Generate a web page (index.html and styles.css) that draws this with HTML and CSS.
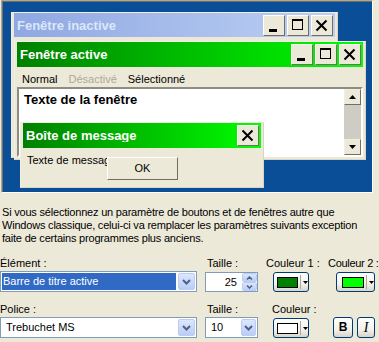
FILE: index.html
```html
<!DOCTYPE html>
<html lang="fr">
<head>
    <meta charset="UTF-8">
    <meta name="viewport" content="width=device-width, initial-scale=1.0">
    <title>Apparence</title>
    <link rel="stylesheet" href="styles.css">
</head>
<body>

    <!-- Apercu -->
    <div class="preview">
        <div class="win win-inactive">
            <div class="title title-inactive">
                <span class="title-text">Fenêtre inactive</span>
                <span class="tbtn"><svg width="20" height="19"><rect x="5" y="13" width="8" height="3"/></svg></span>
                <span class="tbtn"><svg width="20" height="19"><path d="M4 3h11v11H4z M5 5v8h9V5z" fill-rule="evenodd"/></svg></span>
                <span class="tbtn"><svg width="20" height="19"><path d="M4.5 4.5l10 10M14.5 4.5l-10 10" stroke="#000" stroke-width="2"/></svg></span>
            </div>
        </div>

        <div class="win win-active">
            <div class="title title-active">
                <span class="title-text">Fenêtre active</span>
                <span class="tbtn"><svg width="20" height="19"><rect x="5" y="13" width="8" height="3"/></svg></span>
                <span class="tbtn"><svg width="20" height="19"><path d="M4 3h11v11H4z M5 5v8h9V5z" fill-rule="evenodd"/></svg></span>
                <span class="tbtn"><svg width="20" height="19"><path d="M4.5 4.5l10 10M14.5 4.5l-10 10" stroke="#000" stroke-width="2"/></svg></span>
            </div>
            <div class="menu">
                <span>Normal</span>
                <span class="disabled">Désactivé</span>
                <span>Sélectionné</span>
            </div>
            <div class="client">
                <div class="client-text">Texte de la fenêtre</div>
                <div class="scrollbar">
                    <span class="sb-btn"><svg width="7" height="4"><path d="M0 4L3.5 0 7 4z"/></svg></span>
                    <span class="sb-track"></span>
                    <span class="sb-btn"><svg width="7" height="4"><path d="M0 0h7L3.5 4z"/></svg></span>
                </div>
            </div>
        </div>

        <div class="win win-msg">
            <div class="title title-active">
                <span class="title-text">Boîte de message</span>
                <span class="tbtn"><svg width="20" height="19"><path d="M4.5 4.5l10 10M14.5 4.5l-10 10" stroke="#000" stroke-width="2"/></svg></span>
            </div>
            <div class="msg-body">
                Texte de message
                <button class="ok">OK</button>
            </div>
        </div>
    </div>

    <p class="desc">
        Si vous sélectionnez un paramètre de boutons et de fenêtres autre que<br>
        Windows classique, celui-ci va remplacer les paramètres suivants exception<br>
        faite de certains programmes plus anciens.
    </p>

    <!-- Reglages -->
    <div class="settings">
        <span class="lbl">Élément :</span>
        <span class="lbl lbl-size">Taille :</span>
        <span class="lbl">Couleur 1 :</span>
        <span class="lbl lbl-tight">Couleur 2 :</span>

        <div class="combo combo-sel">
            <span class="combo-val">Barre de titre active</span>
            <span class="combo-arrow"><svg width="9" height="6"><path d="M1 1l3.5 3.5L8 1" fill="none" stroke="#4D6185" stroke-width="2"/></svg></span>
        </div>
        <div class="spin">
            <span class="spin-val">25</span>
            <span class="spin-btns">
                <span class="spin-btn"><svg width="7" height="4"><path d="M1 3.5l2.5-2.5 2.5 2.5" fill="none" stroke="#4D6185" stroke-width="1.5"/></svg></span>
                <span class="spin-btn"><svg width="7" height="4"><path d="M1 0.5l2.5 2.5 2.5-2.5" fill="none" stroke="#4D6185" stroke-width="1.5"/></svg></span>
            </span>
        </div>
        <div class="colorbtn c1">
            <span class="swatch sw-dark"></span><span class="sep"></span>
            <svg width="5" height="3"><path d="M0 0h5L2.5 3z"/></svg>
        </div>
        <div class="colorbtn c2">
            <span class="swatch sw-bright"></span><span class="sep"></span>
            <svg width="5" height="3"><path d="M0 0h5L2.5 3z"/></svg>
        </div>

        <span class="lbl lbl-low">Police :</span>
        <span class="lbl lbl-low lbl-size">Taille :</span>
        <span class="lbl lbl-low lbl-col">Couleur :</span>
        <span></span>

        <div class="combo">
            <span class="combo-val">Trebuchet MS</span>
            <span class="combo-arrow"><svg width="9" height="6"><path d="M1 1l3.5 3.5L8 1" fill="none" stroke="#4D6185" stroke-width="2"/></svg></span>
        </div>
        <div class="combo combo-small">
            <span class="combo-val">10</span>
            <span class="combo-arrow"><svg width="9" height="6"><path d="M1 1l3.5 3.5L8 1" fill="none" stroke="#4D6185" stroke-width="2"/></svg></span>
        </div>
        <div class="colorbtn c1">
            <span class="swatch sw-white"></span><span class="sep"></span>
            <svg width="5" height="3"><path d="M0 0h5L2.5 3z"/></svg>
        </div>
        <div class="fmt-group">
            <span class="fmt fmt-b">B</span>
            <span class="fmt fmt-i">I</span>
        </div>
    </div>

</body>
</html>
```

FILE: styles.css
```css
body {
    margin: 0;
    background: #ECE9D8;
    font-family: "Liberation Sans", Arial, sans-serif;
    font-size: 11px;
    line-height: 13px;
    color: #000;
}

/* Apercu */
.preview {
    position: relative;
    width: 370px;
    height: 191px;
    margin-left: 1px;
    border: 1px solid;
    border-color: #ACA899 #fff #fff #ACA899;
    box-shadow: inset 1px 1px #716F64;
    background: #0A4E98;
    overflow: hidden;
}

.win {
    position: absolute;
    box-sizing: border-box;
    background: #ECE9D8;
    border: 1px solid;
    border-color: #F1EFE2 #D8D4C6 #D8D4C6 #F1EFE2;
    padding: 0 2px 2px;
}

.win-inactive {
    left: 9px;
    top: 11px;
    width: 327px;
    height: 146px;
}

.win-active {
    left: 12px;
    top: 40px;
    width: 352px;
}

.win-msg {
    left: 18px;
    top: 121px;
    width: 244px;
    height: 66px;
}

.title {
    display: flex;
    align-items: center;
    height: 24px;
    padding: 0 2px 0 3px;
    color: #fff;
    font-size: 13px;
    font-weight: bold;
}

.title-inactive {
    background: linear-gradient(to right, #8FA8E2, #BCD0F4);
    color: #DCE6F9;
}

.title-active {
    height: 25px;
    background: linear-gradient(to right, #008000, #00FF00);
}

.title-text {
    flex: 1;
    white-space: nowrap;
    overflow: hidden;
}

.tbtn {
    display: flex;
    width: 22px;
    height: 21px;
    box-sizing: border-box;
    border: 1px solid;
    border-color: #fff #716F64 #716F64 #fff;
    background: #ECE9D8;
}

.tbtn + .tbtn {
    margin-left: 2px;
}

.menu {
    display: flex;
    gap: 11px;
    height: 20px;
    box-sizing: border-box;
    padding: 6px 0 0 5px;
}

.disabled {
    color: #ACA899;
}

.client {
    display: flex;
    height: 70px;
    box-sizing: border-box;
    border: 2px solid;
    border-color: #8F8C82 #fff #fff #8F8C82;
    background: #fff;
}

.client-text {
    flex: 1;
    padding: 3px 5px;
    font-size: 13px;
    line-height: 15px;
    font-weight: bold;
}

.scrollbar {
    display: flex;
    flex-direction: column;
    width: 17px;
    background: #CFCCC3;
}

.sb-btn {
    display: flex;
    align-items: center;
    justify-content: center;
    height: 16px;
    box-sizing: border-box;
    border: 1px solid;
    border-color: #F1EFE2 #716F64 #716F64 #F1EFE2;
    background: #ECE9D8;
}

.sb-track {
    flex: 1;
}

.msg-body {
    position: relative;
    height: 37px;
    box-sizing: border-box;
    padding: 6px 4px;
    white-space: nowrap;
}

.ok {
    position: absolute;
    left: 84px;
    top: 9px;
    width: 71px;
    height: 23px;
    box-sizing: border-box;
    padding: 0;
    border: 1px solid;
    border-color: #fff #716F64 #716F64 #fff;
    background: #ECE9D8;
    font: inherit;
    color: #000;
}

/* Texte et reglages */
.desc {
    margin: 13px 0 0 2px;
    letter-spacing: -0.2px;
}

.settings {
    display: grid;
    grid-template-columns: 205px 61px 62px 51px;
    grid-template-rows: 13px 21px 23px 21px;
    row-gap: 1px;
    margin-top: 12px;
}

.lbl {
    white-space: nowrap;
}

.lbl-tight {
    letter-spacing: -0.3px;
}

.lbl-low {
    align-self: end;
}

.lbl-size {
    padding-left: 2px;
}

.lbl-col {
    padding-left: 6px;
}

.combo {
    display: flex;
    align-items: center;
    width: 197px;
    height: 21px;
    box-sizing: border-box;
    border: 1px solid #7F9DB9;
    padding: 1px;
    background: #fff;
}

.combo-val {
    flex: 1;
    height: 17px;
    line-height: 17px;
    padding-left: 4px;
    margin-right: 2px;
    white-space: nowrap;
}

.combo-sel .combo-val {
    padding-left: 1px;
    background: #316AC5;
    color: #fff;
}

.combo-arrow {
    display: flex;
    align-items: center;
    justify-content: center;
    width: 17px;
    height: 17px;
    box-sizing: border-box;
    border: 1px solid #BCCDF3;
    border-radius: 2px;
    background: linear-gradient(#DCE6FD, #BACDF7);
}

.combo-small {
    width: 53px;
}

.combo-small .combo-arrow {
    width: 15px;
    height: 17px;
}

.spin {
    display: flex;
    align-self: end;
    width: 53px;
    height: 20px;
    box-sizing: border-box;
    border: 1px solid #7F9DB9;
    background: #fff;
}

.spin-val {
    flex: 1;
    text-align: right;
    line-height: 18px;
    padding-right: 5px;
}

.spin-btns {
    display: flex;
    flex-direction: column;
    width: 15px;
}

.spin-btn {
    display: flex;
    align-items: center;
    justify-content: center;
    flex: 1;
    border: 1px solid #BCCDF3;
    border-radius: 2px;
    background: linear-gradient(#DCE6FD, #BACDF7);
}

.colorbtn {
    display: flex;
    align-items: center;
    align-self: end;
    height: 20px;
    box-sizing: border-box;
    border: 1px solid #003C74;
    border-radius: 3px;
    background: linear-gradient(#fff, #F3F2EC 60%, #D9D4C9);
}

.c1 {
    width: 36px;
    margin-left: 7px;
    padding-left: 3px;
}

.c2 {
    width: 39px;
    margin-left: 8px;
    padding-left: 5px;
}

.swatch {
    width: 22px;
    height: 11px;
    box-sizing: border-box;
    border: 1px solid #000;
}

.sw-dark {
    background: #008000;
}

.sw-bright {
    background: #00FF00;
}

.sw-white {
    background: #fff;
}

.sep {
    width: 1px;
    height: 14px;
    margin: 0 2px;
    background: #ACA899;
}

.fmt-group {
    display: flex;
    gap: 4px;
    margin-left: 5px;
}

.fmt {
    display: flex;
    align-items: center;
    justify-content: center;
    height: 21px;
    box-sizing: border-box;
    border: 1px solid #003C74;
    border-radius: 3px;
    background: linear-gradient(#fff, #F3F2EC 60%, #D9D4C9);
}

.fmt-b {
    width: 20px;
    font-size: 12px;
    font-weight: bold;
}

.fmt-i {
    width: 18px;
    font-family: "Liberation Serif", serif;
    font-size: 14px;
    font-style: italic;
}
```
